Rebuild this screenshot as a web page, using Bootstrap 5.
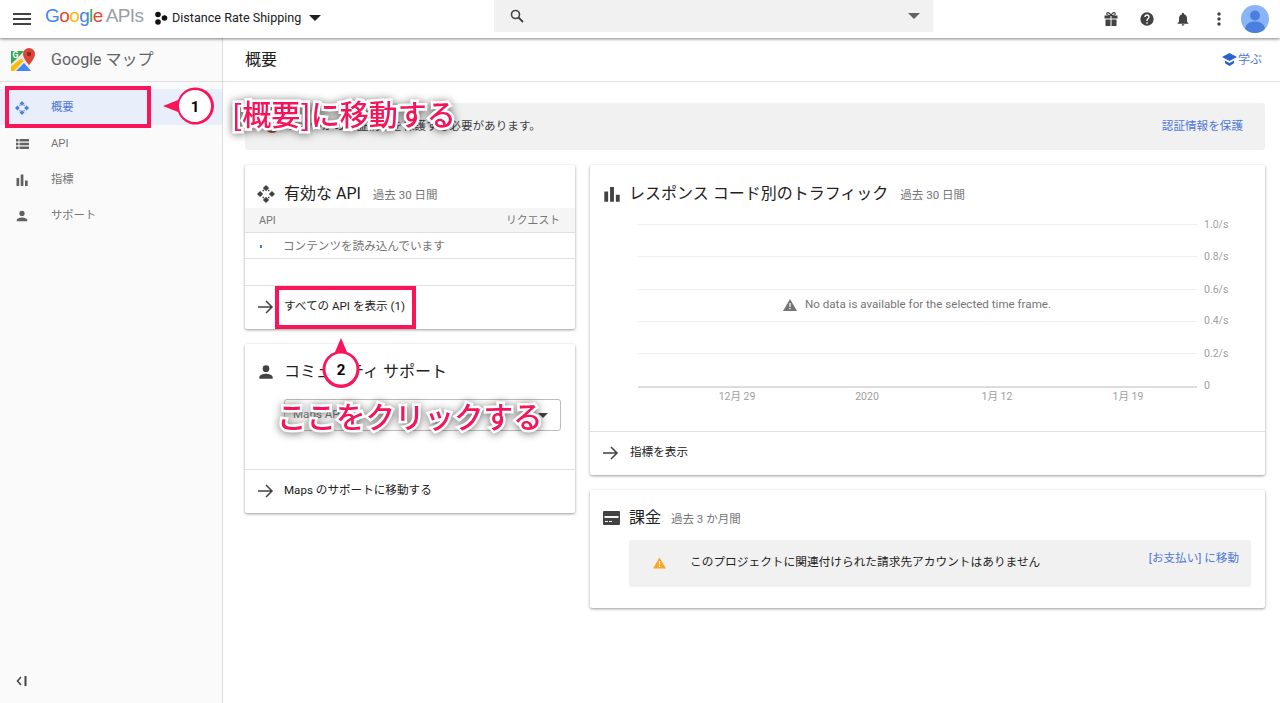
<!DOCTYPE html>
<html lang="ja">
<head>
<meta charset="utf-8">
<title>Google マップ</title>
<link rel="stylesheet" href="https://cdn.jsdelivr.net/npm/bootstrap@5.3.0/dist/css/bootstrap.min.css">
<style>
html,body{height:100%;overflow:hidden}
body{font-family:Roboto,"Noto Sans CJK JP",sans-serif;color:#212121;background:#fff;font-size:11.6px;position:relative}
svg{display:block;flex:none}
.topbar{height:38px;background:#fff;box-shadow:0 1px 3px rgba(0,0,0,.5);position:relative;z-index:2}
.burger{margin:0 6px 0 13px}
.logowrap{margin-left:8px;padding-bottom:7px}
.gapis{font-family:"Liberation Sans",sans-serif;font-size:19px;letter-spacing:-.6px;width:96px;line-height:1;white-space:nowrap}
.gapis b{font-weight:400}
.gapis .apis{color:#9aa0a6;margin-left:3px}
.proj{font-size:12.6px;color:#212121;width:340px;margin-left:13px;padding-bottom:2px}
.searchbox{width:439px;height:32px;background:#f1f1f1;margin-top:-6px;padding:0 13px 0 16px}
.topicons{margin-left:auto;padding-right:11px;gap:20px}
.avatar{width:28px;height:28px;border-radius:50%;background:#8ab4f8;overflow:hidden;margin-left:-6px}
.shell{height:665px}
.sidenav{width:223px;background:#fafafa;border-right:1px solid #dadce0;position:relative;flex:none}
.brandrow{height:44px;border-bottom:1px solid #e0e0e0;padding-left:11px;font-size:16px;color:#5f6368;gap:16px}
.navlist{margin-top:7px}
.navrow{height:36px;padding:2px 0 0 15px;gap:22px;color:#757575;font-size:11.3px}
.navrow.sel{background:#e8eefa;color:#4f78d8}
.collapse-btn{position:absolute;left:16px;bottom:17px;font-size:12px;color:#424242}
.mainpane{min-width:0;flex:1}
.titlerow{height:44px;border-bottom:1px solid #e0e0e0;padding:0 18px 0 22px;font-size:16px}
.learn{color:#4f78d8;font-size:12px;gap:1px}
.notice{height:47px;margin:21px 15px 15px 22px;background:#f1f1f1;border-radius:3px;padding:0 22px 0 20px;color:#3c4043}
.linkish{color:#4f78d8;text-decoration:none}
.colleft{width:330px;margin-left:22px;gap:15px}
.colright{width:675px;margin-left:15px;gap:15px}
.paper{background:#fff;box-shadow:0 1px 3px rgba(0,0,0,.4);border-radius:2px}
.cardhead{font-size:16px;gap:9px;padding-left:12px;color:#212121}
.cardhead small{font-size:11.5px;color:#757575;margin-left:3px;position:relative;top:2px}
.head-a{height:43px;padding-top:14px}
.head-b{height:48px;padding-top:8px;padding-left:13px;gap:10px}
.head-c{height:43px;padding-top:14px;padding-left:13px;gap:8px}
.head-d{height:50px;padding-top:6px;padding-left:13px;gap:9px}
.head-c small{margin-left:4px}
.head-d small{margin-left:1px}
.apihead{height:25px;background:#f5f5f5;border-bottom:1px solid #e0e0e0;padding:2px 15px 0 14px;font-size:10.8px;color:#757575}
.apirow{height:26px;border-bottom:1px solid #e0e0e0;padding:2px 0 0 15px;color:#757575}
.apirow.blank{border-bottom:0}
.dot{width:2px;height:3px;background:#4f78d8;margin-right:21px}
.footlink{height:44px;border-top:1px solid #e0e0e0;padding:0 0 2px 13px;gap:10px;color:#212121}
.footlink.wide{gap:11px;margin-top:7px}
.fakeselect{height:32px;margin:7px 14px 0 39px;border:1px solid #bdbdbd;border-radius:3px;padding:0 12px 0 8px;color:#757575}
.spacer38{height:38px}
.caret{width:0;height:0;border-left:5px solid transparent;border-right:5px solid transparent;border-top:5px solid #424242}
.caret.big{border-left-width:6px;border-right-width:6px;border-top-width:6px;border-top-color:#212121}
.caret.big.grey{border-top-color:#616161}
.chartwrap{height:214px;position:relative;margin-top:2px}
.gridline{position:absolute;left:48px;width:559px;height:1px;background:#eee}
.gridline.base{background:#dcdcdc;height:2px}
.ylabel{position:absolute;left:614px;font-size:10.5px;color:#9e9e9e;line-height:12px}
.xlabel{position:absolute;top:181px;font-size:10.5px;color:#9e9e9e;line-height:12px;width:60px;text-align:center}
.nodata{position:absolute;top:86px;left:193px;color:#757575;gap:8px}
.billcard{height:118px}
.billbox{height:47px;margin:0 14px 0 39px;background:#f1f1f1;border-radius:3px;padding:0 12px 2px 24px;color:#212121;position:relative;gap:24px;font-size:11.7px}
.paylink{position:absolute;right:12px;top:10px;font-size:11.6px}
.callout{position:absolute;z-index:5;pointer-events:none}
.redbox{position:absolute;z-index:4;border:4px solid #fa1558;pointer-events:none}
.caption{position:absolute;z-index:6;color:#f5145a;line-height:1;white-space:nowrap;font-family:"Noto Sans CJK JP",sans-serif;font-weight:500;-webkit-text-stroke:5px #fff;paint-order:stroke fill;filter:drop-shadow(0 1px 4px rgba(0,0,0,.55))}
.cap-a{font-size:29px;left:232px;top:99px}
.cap-b{font-size:29.5px;left:277px;top:401px}
.box-a{left:5px;top:86px;width:146px;height:42px}
.box-b{left:275px;top:286px;width:141px;height:43px}
.call-a{left:161px;top:84px}
.call-b{left:318px;top:337px}
.numtxt{font:700 15px Roboto,sans-serif;fill:#000}
</style>
</head>
<body>
<header class="topbar d-flex align-items-center">
  <svg class="burger" width="18" height="12" viewBox="0 0 18 12"><path d="M0 0h18v2H0zM0 5h18v2H0zM0 10h18v2H0z" fill="#424242"/></svg>
  <div class="logowrap d-flex align-items-center">
    <div class="gapis"><b style="color:#4285f4">G</b><b style="color:#ea4335">o</b><b style="color:#fbbc05">o</b><b style="color:#4285f4">g</b><b style="color:#34a853">l</b><b style="color:#ea4335">e</b><span class="apis">APIs</span></div>
  </div>
  <div class="proj d-flex align-items-center gap-1">
    <svg width="14" height="14" viewBox="0 0 14 14"><circle cx="4" cy="3.500" r="2.800" fill="#111"/><circle cx="10.500" cy="7" r="2.800" fill="#111"/><circle cx="4" cy="11" r="2.800" fill="#111"/></svg>
    <span>Distance Rate Shipping</span>
    <span class="caret big ms-1"></span>
  </div>
  <div class="searchbox d-flex align-items-center justify-content-between">
    <svg width="14" height="14" viewBox="0 0 14 14"><circle cx="5.500" cy="5.500" r="4" fill="none" stroke="#424242" stroke-width="1.600"/><path d="M8.500 8.500l4.500 4.500" stroke="#424242" stroke-width="1.800"/></svg>
    <span class="caret big grey"></span>
  </div>
  <div class="topicons d-flex align-items-center">
    <svg width="16" height="16" viewBox="0 0 16 16"><path fill="#424242" d="M1.500 4.500h6v3h-6zM8.500 4.500h6v3h-6zM2.500 8.500h5V15h-5zM8.500 8.500h5V15h-5z"/><path d="M8 4.500C6.500 1 3.500 1 3.800 3c.1.800 2 1.500 4.200 1.500zm0 0c1.500-3.500 4.500-3.500 4.200-1.500-.1.800-2 1.500-4.200 1.500z" fill="none" stroke="#424242" stroke-width="1.200"/></svg>
    <svg width="16" height="16" viewBox="0 0 24 24"><path fill="#424242" d="M12 2a10 10 0 1 0 0 20 10 10 0 0 0 0-20zm1 17h-2v-2h2zm2.100-7.700-.9.9c-.7.7-1.200 1.300-1.200 2.800h-2v-.5c0-1.100.5-2.100 1.200-2.800l1.200-1.300c.4-.3.600-.8.600-1.400a2 2 0 0 0-4 0H8a4 4 0 0 1 8 0c0 .9-.4 1.700-.9 2.300z"/></svg>
    <svg width="16" height="16" viewBox="0 0 24 24"><path fill="#424242" d="M12 22a2 2 0 0 0 2-2h-4a2 2 0 0 0 2 2zm6-6v-5c0-3.100-1.600-5.600-4.500-6.300V4a1.500 1.500 0 0 0-3 0v.7C7.600 5.400 6 7.900 6 11v5l-2 2v1h16v-1z"/></svg>
    <svg width="16" height="14" viewBox="0 0 16 14"><circle cx="8" cy="2" r="1.700" fill="#424242"/><circle cx="8" cy="7" r="1.700" fill="#424242"/><circle cx="8" cy="12" r="1.700" fill="#424242"/></svg>
    <div class="avatar">
      <svg width="28" height="28" viewBox="0 0 28 28"><circle cx="14" cy="10.500" r="5" fill="#4a7fe0"/><path d="M4 24c1-6 6-7.500 10-7.500S23 18 24 24v4H4z" fill="#4a7fe0"/></svg>
    </div>
  </div>
</header>

<div class="shell d-flex">
  <nav class="sidenav">
    <div class="brandrow d-flex align-items-center">
      <svg width="24" height="24" viewBox="0 0 24 24">
        <path d="M0 3h19v20H0z" fill="#e8eaed"/>
        <path d="M0 3h13L0 16z" fill="#34a853"/>
        <path d="M0 3h12v1L1 15H0z" fill="#34a853"/>
        <path d="M0 23v-4.500L10 10.500l2.500 2.500L3 23z" fill="#fbbc05"/>
        <path d="M5 23l8-8 7 8z" fill="#4285f4"/>
        <text x="1.500" y="10" font-size="8.500" font-weight="700" fill="#fff" font-family="Roboto">G</text>
        <path d="M18 0a6 6 0 0 0-6 6c0 4.500 6 11 6 11s6-6.500 6-11a6 6 0 0 0-6-6z" fill="#db4437"/>
        <circle cx="18" cy="6" r="2.200" fill="#8a2a1f"/>
      </svg>
      <span>Google マップ</span>
    </div>
    <div class="navlist">
    <div class="navrow sel d-flex align-items-center">
      <svg width="14" height="14" viewBox="0 0 14 14"><path fill="#4a7fe0" d="M7 0l2.400 2.400L7 4.800 4.600 2.400zM7 9.200l2.400 2.400L7 14l-2.400-2.400zM2.400 4.600l2.400 2.400-2.400 2.400L0 7zM11.600 4.600L14 7l-2.400 2.400L9.200 7z"/><path fill="#4a7fe0" d="M4.300 3.700h1.200v1.200H4.300zM8.500 3.700h1.200v1.200H8.500zM4.300 9.100h1.200v1.200H4.300zM8.500 9.100h1.200v1.200H8.500z"/></svg>
      <span>概要</span>
    </div>
    <div class="navrow d-flex align-items-center">
      <svg width="14" height="14" viewBox="0 0 14 14"><path fill="#616161" d="M1 2h2.500v2.500H1zM4.500 2H14v2.500H4.500zM1 5.800h2.500v2.500H1zM4.500 5.800H14v2.500H4.500zM1 9.600h2.500v2.500H1zM4.500 9.600H14v2.500H4.500z"/></svg>
      <span>API</span>
    </div>
    <div class="navrow d-flex align-items-center">
      <svg width="14" height="14" viewBox="0 0 14 14"><path fill="#616161" d="M1.500 5h2.700v8H1.500zM5.700 1.500h2.700V13H5.700zM10 7.500h2.700V13H10z"/></svg>
      <span>指標</span>
    </div>
    <div class="navrow d-flex align-items-center">
      <svg width="14" height="14" viewBox="0 0 24 24"><path fill="#616161" d="M12 12a4.500 4.500 0 1 0 0-9 4.500 4.500 0 0 0 0 9zm0 2.500c-3 0-9 1.500-9 4.500v2h18v-2c0-3-6-4.500-9-4.500z"/></svg>
      <span>サポート</span>
    </div>
    </div>
    <svg class="collapse-btn" width="11" height="10" viewBox="0 0 11 10"><path d="M5 1L1.500 5 5 9" fill="none" stroke="#424242" stroke-width="1.500"/><path d="M8.500 0H10.500v10H8.500z" fill="#424242"/></svg>
  </nav>

  <main class="mainpane">
    <div class="titlerow d-flex align-items-center justify-content-between">
      <span>概要</span>
      <a class="learn linkish d-flex align-items-center" href="#">
        <svg width="15" height="13" viewBox="0 0 15 13"><path fill="#2a62d0" d="M7.500 0L0 4l7.500 4L15 4zM3 7.500v2.700L7.500 13 12 10.200V7.500L7.500 10z"/></svg>
        <span>学ぶ</span>
      </a>
    </div>

    <div class="notice d-flex align-items-center justify-content-between">
      <span class="d-flex align-items-center gap-2">
        <svg width="14" height="14" viewBox="0 0 14 14"><circle cx="7" cy="7" r="6" fill="none" stroke="#c5392b" stroke-width="2"/></svg>
        <span>いくつかの認証情報を保護する必要があります。</span>
      </span>
      <a class="linkish" href="#">認証情報を保護</a>
    </div>

    <div class="d-flex align-items-start">
      <div class="colleft d-flex flex-column">
        <section class="paper">
          <div class="cardhead head-a d-flex align-items-center">
            <svg width="18" height="18" viewBox="0 0 14 14"><path fill="#424242" d="M7 0l2.400 2.400L7 4.800 4.600 2.400zM7 9.200l2.400 2.400L7 14l-2.400-2.400zM2.400 4.600l2.400 2.400-2.400 2.400L0 7zM11.600 4.600L14 7l-2.400 2.400L9.200 7z"/><path fill="#424242" d="M4.300 3.700h1.200v1.200H4.300zM8.500 3.700h1.200v1.200H8.500zM4.300 9.100h1.200v1.200H4.300zM8.500 9.100h1.200v1.200H8.500z"/></svg>
            <span>有効な API</span><small>過去 30 日間</small>
          </div>
          <div class="apihead d-flex align-items-center justify-content-between"><span>API</span><span>リクエスト</span></div>
          <div class="apirow d-flex align-items-center"><span class="dot"></span><span>コンテンツを読み込んでいます</span></div>
          <div class="apirow blank"></div>
          <div class="footlink d-flex align-items-center">
            <svg width="16" height="14" viewBox="0 0 16 14"><path d="M0 7h14M8 1l6 6-6 6" fill="none" stroke="#424242" stroke-width="1.500"/></svg>
            <span>すべての API を表示 (1)</span>
          </div>
        </section>
        <section class="paper">
          <div class="cardhead head-b d-flex align-items-center">
            <svg width="16" height="16" viewBox="0 0 24 24"><path fill="#424242" d="M12 12a5 5 0 1 0 0-10 5 5 0 0 0 0 10zm0 2.500c-3.300 0-10 1.700-10 5V22h20v-2.500c0-3.300-6.700-5-10-5z"/></svg>
            <span>コミュニティ サポート</span>
          </div>
          <div class="fakeselect d-flex align-items-center justify-content-between"><span>Maps API</span><span class="caret"></span></div>
          <div class="spacer38"></div>
          <div class="footlink d-flex align-items-center">
            <svg width="16" height="14" viewBox="0 0 16 14"><path d="M0 7h14M8 1l6 6-6 6" fill="none" stroke="#424242" stroke-width="1.500"/></svg>
            <span>Maps のサポートに移動する</span>
          </div>
        </section>
      </div>

      <div class="colright d-flex flex-column">
        <section class="paper">
          <div class="cardhead head-c d-flex align-items-center">
            <svg width="18" height="18" viewBox="0 0 14 14"><path fill="#424242" d="M1 5h3v8H1zM5.500 1.500h3V13h-3zM10 7.500h3V13h-3z"/></svg>
            <span>レスポンス コード別のトラフィック</span><small>過去 30 日間</small>
          </div>
          <div class="chartwrap">
            <div class="gridline" style="top:14px"></div>
            <div class="gridline" style="top:46px"></div>
            <div class="gridline" style="top:79px"></div>
            <div class="gridline" style="top:111px"></div>
            <div class="gridline" style="top:143px"></div>
            <div class="gridline base" style="top:176px"></div>
            <div class="ylabel" style="top:9px">1.0/s</div>
            <div class="ylabel" style="top:41px">0.8/s</div>
            <div class="ylabel" style="top:74px">0.6/s</div>
            <div class="ylabel" style="top:105px">0.4/s</div>
            <div class="ylabel" style="top:138px">0.2/s</div>
            <div class="ylabel" style="top:170px">0</div>
            <div class="xlabel" style="left:117px">12月 29</div>
            <div class="xlabel" style="left:247px">2020</div>
            <div class="xlabel" style="left:377px">1月 12</div>
            <div class="xlabel" style="left:508px">1月 19</div>
            <div class="nodata d-flex align-items-center">
              <svg width="14" height="12" viewBox="0 0 14 12"><path fill="#757575" d="M7 0l7 12H0z"/><path fill="#fff" d="M6.400 4h1.200v4H6.400zM6.400 9h1.200v1.200H6.400z"/></svg>
              <span>No data is available for the selected time frame.</span>
            </div>
          </div>
          <div class="footlink wide d-flex align-items-center">
            <svg width="16" height="14" viewBox="0 0 16 14"><path d="M0 7h14M8 1l6 6-6 6" fill="none" stroke="#424242" stroke-width="1.500"/></svg>
            <span>指標を表示</span>
          </div>
        </section>
        <section class="paper billcard">
          <div class="cardhead head-d d-flex align-items-center">
            <svg width="17" height="14" viewBox="0 0 17 14"><path fill="#424242" d="M1 0h15a1 1 0 0 1 1 1v12a1 1 0 0 1-1 1H1a1 1 0 0 1-1-1V1a1 1 0 0 1 1-1z"/><path fill="#f5f5f5" d="M1.500 5h14v2h-14zM2 10h3v1H2zM6 10h3v1H6z"/></svg>
            <span>課金</span><small>過去 3 か月間</small>
          </div>
          <div class="billbox d-flex align-items-center">
            <svg width="13" height="12" viewBox="0 0 14 12"><path fill="#f9a825" d="M7 0l7 12H0z"/><path fill="#fff" d="M6.400 4h1.200v4H6.400zM6.400 9h1.200v1.200H6.400z"/></svg>
            <span>このプロジェクトに関連付けられた請求先アカウントはありません</span>
            <a class="paylink linkish" href="#">[お支払い] に移動</a>
          </div>
        </section>
      </div>
    </div>
  </main>
</div>

<div class="redbox box-a"></div>
<div class="redbox box-b"></div>

<svg class="callout call-a" width="60" height="46" viewBox="0 0 60 46"><path d="M2 22l15-6a18.500 18.500 0 1 1 0 12z" fill="#fa1558"/><circle cx="34" cy="22" r="16" fill="#fff"/><text class="numtxt" x="34" y="27.500" text-anchor="middle">1</text></svg>
<svg class="callout call-b" width="46" height="54" viewBox="0 0 46 54"><path d="M23 1l6 14a18.500 18.500 0 1 1-12 0z" fill="#fa1558"/><circle cx="23" cy="32" r="15.500" fill="#fff"/><text class="numtxt" x="23" y="37.500" text-anchor="middle">2</text></svg>

<div class="caption cap-a">[概要]に移動する</div>
<div class="caption cap-b">ここをクリックする</div>
</body>
</html>
